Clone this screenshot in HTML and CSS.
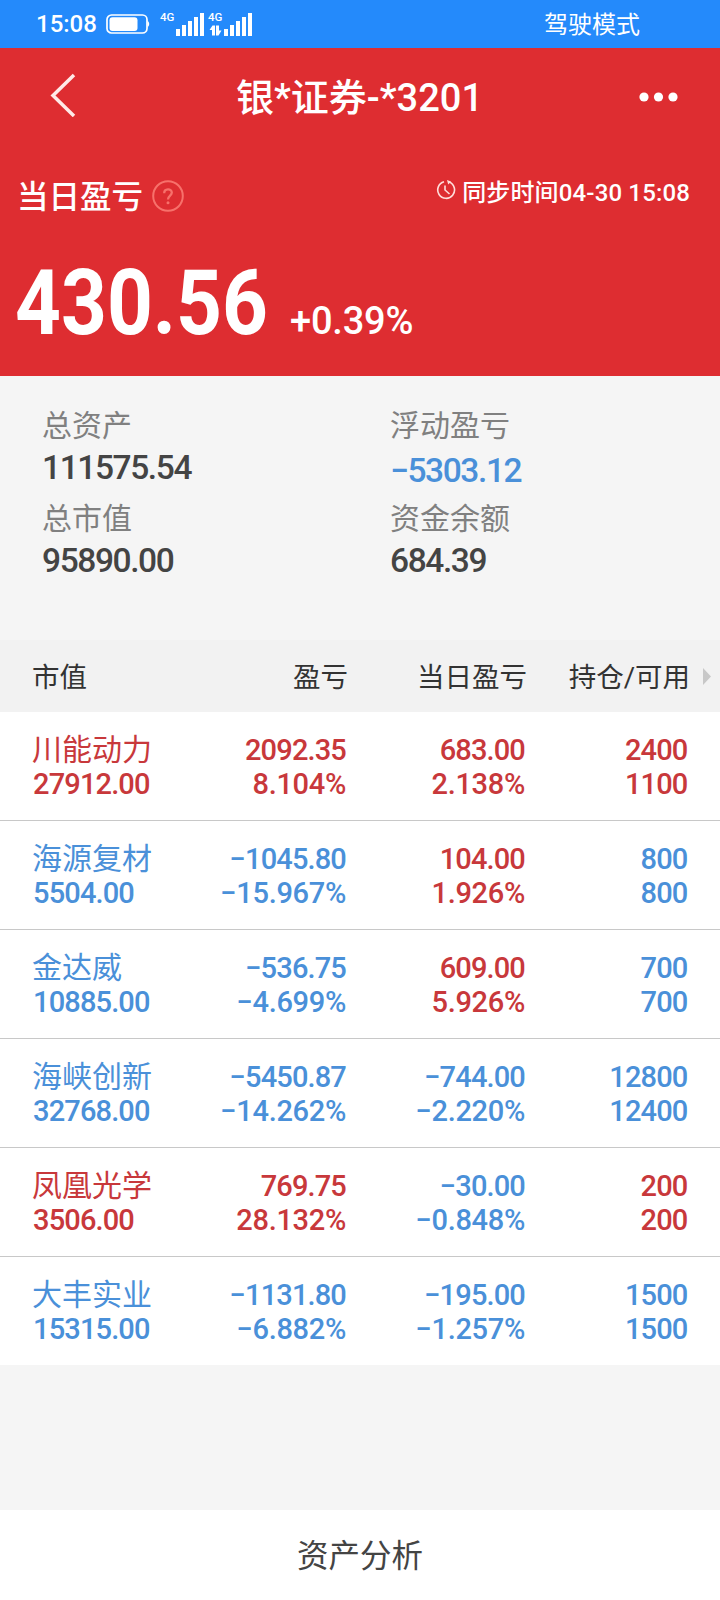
FILE: index.html
```html
<!DOCTYPE html>
<html lang="zh-CN">
<head>
<meta charset="utf-8">
<title>银*证券</title>
<link rel="stylesheet" href="styles.css">
</head>
<body>
<div class="status">
  <span class="time">15:08</span>
  <svg class="battery" width="44" height="20" viewBox="0 0 44 20"><rect x="1" y="1" width="40" height="18" rx="4.5" fill="none" stroke="#fff" stroke-width="1.7"/><rect x="3.5" y="3.2" width="28" height="13.8" rx="3" fill="#fff"/><path d="M41.500 6.500q3.500 3.500 0 7z" fill="#fff"/></svg>
  <svg class="signal" width="93" height="32" viewBox="0 -4 93 32">
    <g fill="#fff"><text x="0" y="9" class="net">4G</text><text x="48" y="9" class="net">4G</text>
    <path d="M16 17h4v7h-4zM22 13h4v11h-4zM28 9h4v15h-4zM34 5h4v19h-4zM40 1h4v23h-4zM64 17h4v7h-4zM70 13h4v11h-4zM76 9h4v15h-4zM82 5h4v19h-4zM88 1h4v23h-4z"/>
    <path d="M49.500 18l3-4.500h2.500v10h-3v-5.500zM56 13.500h3v5h2.500l-3 5h-2.500z"/></g>
  </svg>
  <span class="mode">驾驶模式</span>
</div>
<header class="hero">
  <div class="nav">
    <svg class="back" width="26" height="44" viewBox="0 0 26 44"><path d="M24 2L3 22.500L24 43" fill="none" stroke="#ffeae8" stroke-width="3.500"/></svg>
    <h1 class="title">银*证券-*3201</h1>
    <svg class="more" width="40" height="10" viewBox="0 0 40 10"><g fill="#fff"><circle cx="5" cy="5" r="4.600"/><circle cx="19.500" cy="5" r="4.600"/><circle cx="34" cy="5" r="4.600"/></g></svg>
  </div>
  <div class="daily">
    <span class="daily-label">当日盈亏</span>
    <svg class="help" width="32" height="32" viewBox="0 0 32 32"><g fill="none" stroke="#f7716b" stroke-width="2"><circle cx="16" cy="16" r="14.800"/><path d="M12.200 13.200c0-5 7.600-5 7.600-.6 0 3-3.800 3-3.800 7" stroke-width="2.300"/></g><circle cx="16" cy="22.800" r="1.500" fill="#f7716b"/></svg>
    <svg class="clock" width="20" height="20" viewBox="0 0 20 20"><g fill="none" stroke="#ffdedb" stroke-width="1.600"><path d="M13.200 2.100A8.400 8.400 0 1 1 8 1.800"/><path d="M9 5.500V10l4.500 4"/></g><path d="M11 0l4 1.500-2.800 3z" fill="#ffdedb"/></svg>
    <span class="sync">同步时间04-30 15:08</span>
  </div>
  <div class="profit"><span class="amount">430.56</span><span class="rate">+0.39%</span></div>
</header>
<section class="summary">
  <div class="stat"><div class="label">总资产</div><div class="value">111575.54</div></div>
  <div class="stat"><div class="label">浮动盈亏</div><div class="value low blue">−5303.12</div></div>
  <div class="stat"><div class="label">总市值</div><div class="value">95890.00</div></div>
  <div class="stat"><div class="label">资金余额</div><div class="value">684.39</div></div>
</section>
<section class="holdings">
  <div class="cols head"><span>市值</span><span>盈亏</span><span>当日盈亏</span><span>持仓/可用</span><svg class="arrow" width="8" height="17" viewBox="0 0 8 17"><path d="M0 0l8 8.500-8 8.500z" fill="#c8c8c8"/></svg></div>
  <div class="cols row red"><div><b>川能动力</b>27912.00</div><div>2092.35<br>8.104%</div><div>683.00<br>2.138%</div><div>2400<br>1100</div></div>
  <div class="cols row blue"><div><b>海源复材</b>5504.00</div><div>−1045.80<br>−15.967%</div><div class="red">104.00<br>1.926%</div><div>800<br>800</div></div>
  <div class="cols row blue"><div><b>金达威</b>10885.00</div><div>−536.75<br>−4.699%</div><div class="red">609.00<br>5.926%</div><div>700<br>700</div></div>
  <div class="cols row blue"><div><b>海峡创新</b>32768.00</div><div>−5450.87<br>−14.262%</div><div>−744.00<br>−2.220%</div><div>12800<br>12400</div></div>
  <div class="cols row red"><div><b>凤凰光学</b>3506.00</div><div>769.75<br>28.132%</div><div class="blue">−30.00<br>−0.848%</div><div>200<br>200</div></div>
  <div class="cols row blue"><div><b>大丰实业</b>15315.00</div><div>−1131.80<br>−6.882%</div><div>−195.00<br>−1.257%</div><div>1500<br>1500</div></div>
</section>
<footer class="footer">资产分析</footer>
</body>
</html>
```
FILE: styles.css
```css
* { box-sizing: border-box; }
body {
  margin: 0;
  width: 720px;
  height: 1600px;
  display: flex;
  flex-direction: column;
  overflow: hidden;
  background: #f5f5f5;
  font-family: Roboto, "Noto Sans CJK SC", sans-serif;
}
svg { display: block; flex: none; }
.status {
  height: 48px;
  display: flex;
  align-items: center;
  padding: 0 80px 0 36px;
  background: #248afb;
  color: #fff;
  font-size: 24px;
}
.time { width: 70px; font-weight: 500; }
.signal { margin-left: 10px; }
.net { font: 500 11.5px Roboto, sans-serif; }
.mode { margin: -3px 0 0 auto; }
.hero {
  height: 328px;
  background: #de2d31;
  color: #fff;
}
.nav {
  height: 98px;
  display: grid;
  grid-template-columns: 1fr auto 1fr;
  align-items: center;
  padding: 0 41px 0 50px;
}
.back { margin-top: -6px; }
.title { margin: 0; font-size: 38px; font-weight: 500; line-height: 100px; padding-right: 10px; }
.more { justify-self: end; margin-top: -3px; }
.daily { height: 100px; display: flex; align-items: center; padding: 0 30px 0 17px; }
.daily-label { font-size: 31.5px; font-weight: 500; line-height: 40px; margin-top: 3px; }
.help { margin-left: 9px; }
.clock { margin: -12px 6px 0 auto; }
.sync { font-size: 24px; font-weight: 500; margin-top: -12px; letter-spacing: .15px; }
.profit { display: flex; align-items: baseline; height: 110px; padding-left: 15px; line-height: 116px; }
.amount {
  width: 275px;
  font-size: 90px;
  font-weight: 700;
  transform: scaleX(.89);
  transform-origin: left;
}
.rate { font-size: 38px; font-weight: 500; letter-spacing: -.2px; }
.summary {
  height: 264px;
  display: grid;
  grid-template-columns: 348px 1fr;
  grid-auto-rows: 93px;
  padding: 29px 0 0 42px;
}
.label { font-size: 30px; line-height: 42px; color: #808080; }
.value { font-size: 33.500px; font-weight: 500; line-height: 42px; letter-spacing: -1.4px; color: #444; }
.low { padding-top: 3px; }
.cols {
  display: grid;
  grid-template-columns: 150px 164px 179px 163px 1fr;
  padding-left: 33px;
  text-align: right;
}
.cols > :first-child { text-align: left; }
.head {
  height: 72px;
  align-items: center;
  padding-left: 32px;
  grid-template-columns: 152px 164px 179px 163px 1fr;
  background: #f2f2f2;
  color: #333;
  font-size: 27.500px;
}
.head span { margin-top: -2px; }
.arrow { margin-left: 13px; }
.row {
  height: 109px;
  padding-top: 21px;
  background: #fff;
  border-bottom: 1px solid #c8c8c8;
  font-size: 29px;
  font-weight: 500;
  line-height: 34px;
  letter-spacing: -.3px;
}
.row:last-child { height: 108px; border-bottom: 0; }
.row div { padding-right: 1px; }
/* plain figures are set tighter than percentages */
.row div:first-child, .row div:last-child, .row div::first-line { letter-spacing: -.85px; }
.row div:last-child, .row div:first-child { padding-right: 1.5px; }
.row b { display: block; margin-left: -1px; font-size: 30px; font-weight: 400; letter-spacing: 0; }
.row div:first-child::first-line { letter-spacing: 0; }
.red { color: #c8383b; }
.value.blue, .blue { color: #4a90d9; }
.footer {
  height: 90px;
  margin-top: auto;
  background: #fff;
  color: #444;
  font-size: 31.500px;
  line-height: 93px;
  text-align: center;
}
```
